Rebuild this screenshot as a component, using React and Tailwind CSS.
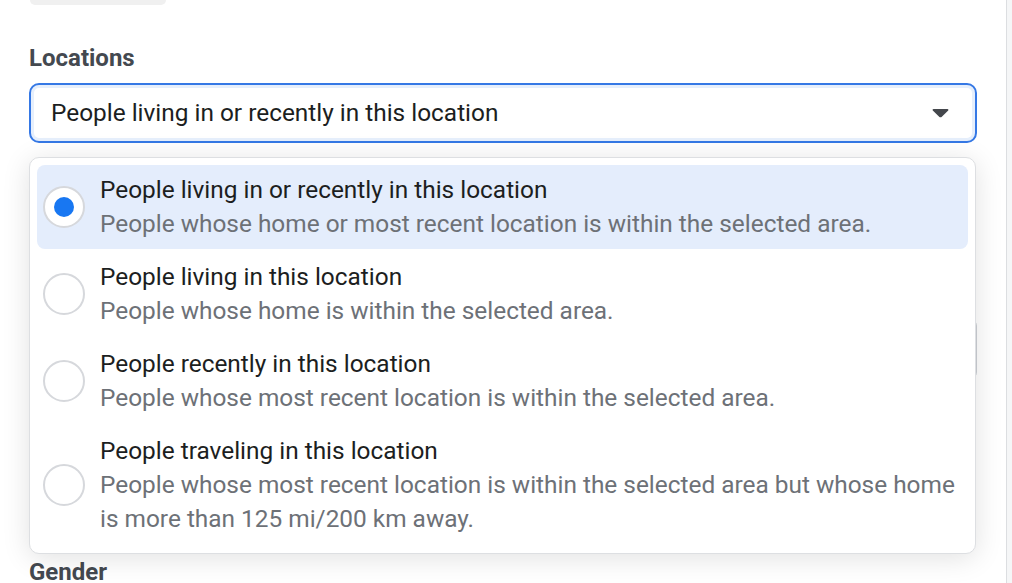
import { useState } from 'react';

const options = [
  {
    id: 'recent_or_home',
    title: 'People living in or recently in this location',
    description: 'People whose home or most recent location is within the selected area.',
  },
  {
    id: 'home',
    title: 'People living in this location',
    description: 'People whose home is within the selected area.',
  },
  {
    id: 'recent',
    title: 'People recently in this location',
    description: 'People whose most recent location is within the selected area.',
  },
  {
    id: 'travel_in',
    title: 'People traveling in this location',
    description:
      'People whose most recent location is within the selected area but whose home is more than 125 mi/200 km away.',
  },
];

function Radio({ checked }) {
  return (
    <div className="flex h-[42px] w-[42px] shrink-0 items-center justify-center rounded-full border-2 border-[#d6d8dc] bg-white">
      {checked && <div className="h-[20px] w-[20px] rounded-full bg-[#1877f2]" />}
    </div>
  );
}

export default function App() {
  const [selected, setSelected] = useState('recent_or_home');
  const current = options.find((o) => o.id === selected);

  return (
    <div className="flex h-[583px] w-[1012px] overflow-hidden bg-white font-['Roboto',sans-serif]">
      {/* Main column */}
      <div className="relative h-full w-[1006px] px-[29px]">
        <div className="ml-[1px] h-[5px] w-[136px] rounded-b-[12px] bg-[#f0f0f0]" />

        <div className="mt-[39px] text-[24px] font-bold leading-[28px] text-[#444950]">Locations</div>

        {/* Select */}
        <div className="mt-[11px] flex h-[60px] w-[948px] items-center justify-between rounded-[10px] border-2 border-[#3578e5] pl-[20px] pr-[26px] shadow-[inset_0_0_0_3px_#e6effc]">
          <span className="text-[24.4px] text-[#1c1e21]">{current.title}</span>
          <svg width="17" height="10" viewBox="0 0 17 10">
            <path d="M1.5 1h14c.8 0 1.2.9.7 1.5l-6.6 6.4c-.6.6-1.6.6-2.2 0L.8 2.5C.3 1.9.7 1 1.5 1z" fill="#44474c" />
          </svg>
        </div>

        {/* Field partly covered by the menu */}
        <div className="mt-[175px] h-[62px] w-[948px] rounded-[8px] border border-[#ccd0d5]" />

        <div className="mt-[178px] text-[24px] font-bold leading-[28px] text-[#444950]">Gender</div>

        {/* Dropdown menu */}
        <div className="absolute left-[29px] top-[157px] w-[947px] rounded-[10px] border border-[#dddfe2] bg-white px-[7px] pb-[9px] pt-[7px] shadow-[0_4px_28px_rgba(0,0,0,0.12)]">
          <div className="flex flex-col gap-[3px]">
            {options.map((o) => (
              <button
                key={o.id}
                onClick={() => setSelected(o.id)}
                className={`flex w-full items-center rounded-[8px] py-[8px] pl-[6px] pr-[8px] text-left ${
                  o.id === selected ? 'bg-[#e4edfc]' : ''
                }`}
              >
                <Radio checked={o.id === selected} />
                <div className="ml-[15px]">
                  <div className="text-[24.4px] leading-[34px] text-[#1c1e21]">{o.title}</div>
                  <div className="text-[24.4px] leading-[34px] text-[#6d7177]">{o.description}</div>
                </div>
              </button>
            ))}
          </div>
        </div>
      </div>

      {/* Right edge */}
      <div className="h-full flex-1 border-l border-[#dcdee1] bg-[#f5f6f7]" />
    </div>
  );
}
